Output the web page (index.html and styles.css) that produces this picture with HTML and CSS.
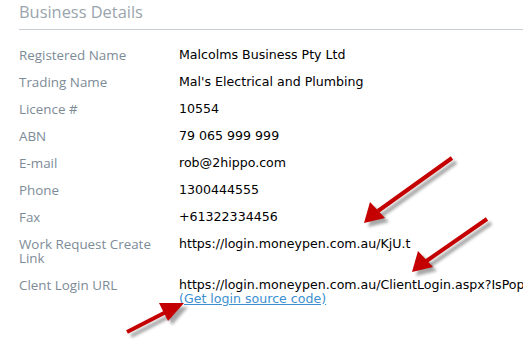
FILE: index.html
```html
<!DOCTYPE html>
<html lang="en">
<head>
  <meta charset="UTF-8" />
  <title>Business Details</title>
  <link rel="stylesheet" href="styles.css">
</head>
<body>

<section class="panel">
  <h2 class="panel-title">Business Details</h2>

  <div class="details">
    <div class="label">Registered Name</div>
    <div class="value">Malcolms Business Pty Ltd</div>

    <div class="label">Trading Name</div>
    <div class="value">Mal's Electrical and Plumbing</div>

    <div class="label">Licence #</div>
    <div class="value">10554</div>

    <div class="label">ABN</div>
    <div class="value">79 065 999 999</div>

    <div class="label">E-mail</div>
    <div class="value">rob@2hippo.com</div>

    <div class="label">Phone</div>
    <div class="value">1300444555</div>

    <div class="label">Fax</div>
    <div class="value">+61322334456</div>

    <div class="label">Work Request Create Link</div>
    <div class="value">https://login.moneypen.com.au/KjU.t</div>

    <div class="label">Clent Login URL</div>
    <div class="value">
      https://login.moneypen.com.au/ClientLogin.aspx?IsPop<br>
      <a href="#" class="source-link">(Get login source code)</a>
    </div>
  </div>
</section>

<svg class="arrows" width="523" height="344" viewBox="0 0 523 344">
  <defs>
    <filter id="shade" x="-20%" y="-20%" width="140%" height="140%">
      <feGaussianBlur stdDeviation="1.6" />
    </filter>
  </defs>

  <g class="shadow" filter="url(#shade)" transform="translate(4,4)">
    <line x1="452" y1="158" x2="378" y2="211" />
    <polygon points="364,223 370,202 385,218" />
    <line x1="487" y1="219" x2="425" y2="262" />
    <polygon points="412,272 418,251 433,267" />
    <line x1="127" y1="332" x2="166" y2="312" />
    <polygon points="184,303 159,303 168,321" />
  </g>

  <g class="arrow">
    <line x1="452" y1="158" x2="378" y2="211" />
    <polygon points="364,223 370,202 385,218" />
    <line x1="487" y1="219" x2="425" y2="262" />
    <polygon points="412,272 418,251 433,267" />
    <line x1="127" y1="332" x2="166" y2="312" />
    <polygon points="184,303 159,303 168,321" />
  </g>
</svg>

</body>
</html>
```

FILE: styles.css
```css
body {
  margin: 0;
  background-color: #ffffff;
  overflow: hidden;
  width: 523px;
  height: 344px;
  position: relative;
}
.panel {
  padding-left: 19px;
}
.panel-title {
  margin: 2px 0 0;
  padding-bottom: 7px;
  border-bottom: 1px solid #c5ccd3;
  font-family: "Open Sans", "DejaVu Sans", sans-serif;
  font-size: 16.4px;
  line-height: 20px;
  font-weight: normal;
  color: #9aa4ad;
}
.details {
  display: grid;
  grid-template-columns: 150px minmax(0, 1fr);
  column-gap: 10px;
  row-gap: 13px;
  margin-top: 18px;
}
.label {
  font-family: "Open Sans", "DejaVu Sans", sans-serif;
  font-size: 13.4px;
  line-height: 14px;
  color: #7d8b97;
}
.value {
  font-family: "DejaVu Sans", Verdana, sans-serif;
  font-size: 12.6px;
  line-height: 14px;
  color: #000000;
  white-space: nowrap;
  overflow: hidden;
}
.source-link {
  color: #3c8fd0;
  text-decoration: underline;
}
.arrows {
  position: absolute;
  left: 0;
  top: 0;
  pointer-events: none;
}
.arrows line {
  stroke-width: 4;
  stroke-linecap: butt;
}
.arrow line {
  stroke: #c40000;
}
.arrow polygon {
  fill: #c40000;
}
.shadow line {
  stroke: rgba(0, 0, 0, 0.35);
}
.shadow polygon {
  fill: rgba(0, 0, 0, 0.35);
}
```
